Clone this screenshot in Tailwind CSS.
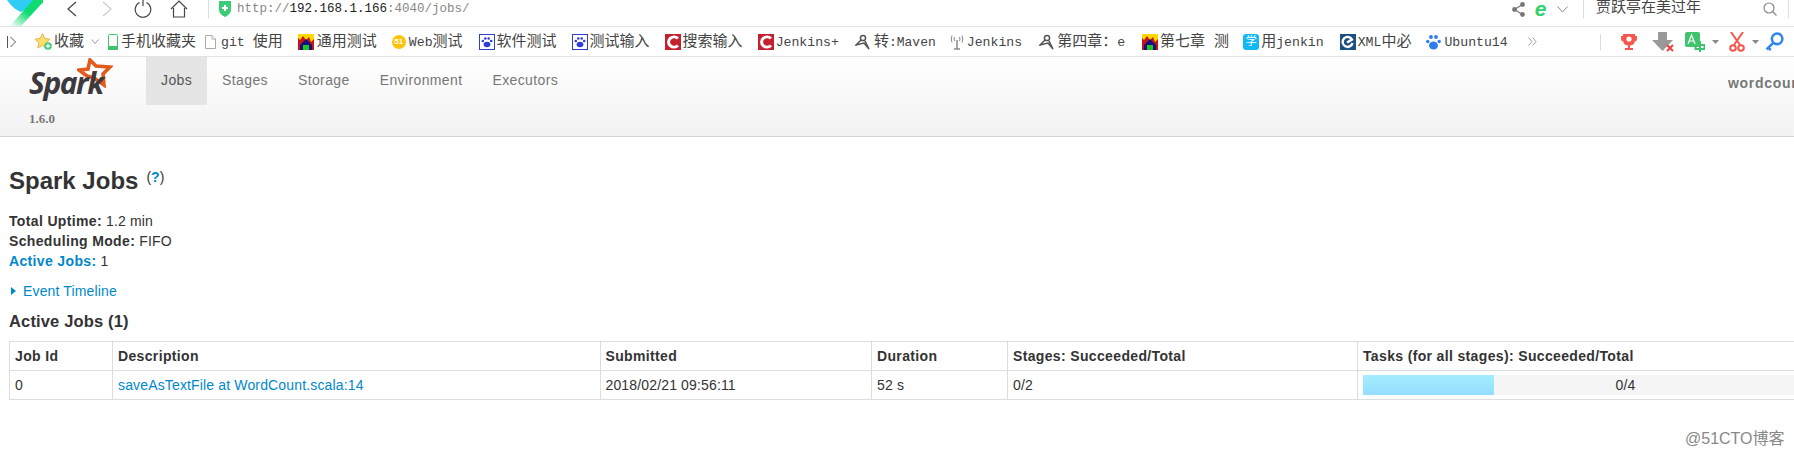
<!DOCTYPE html>
<html lang="zh">
  <head>
    <meta charset="UTF-8" />
    <title>Spark Jobs</title>
    <script src="https://cdn.jsdelivr.net/npm/@tailwindcss/browser@4"></script>
  </head>

  <body class="bg-white w-[1794px] h-[461px] overflow-hidden font-['Liberation_Sans',sans-serif] text-[14px] text-[#333]">
    <!-- browser address row -->
    <div class="flex items-center h-[26px] pb-[8px] font-['Liberation_Mono','Noto_Sans_CJK_SC',monospace] text-[#444]">
      <svg class="ml-[7px] w-[36px] h-[26px] mt-[8px] shrink-0" viewBox="0 0 36 26">
        <defs>
          <linearGradient id="logoGreen" x1="1" y1="0" x2="0" y2="1">
            <stop offset="0.5" stop-color="#0fdc6e" />
            <stop offset="1" stop-color="#ffffff" />
          </linearGradient>
        </defs>
        <path d="M0 0 H28 Q22 9 14 12 Q6 9 0 0 Z" fill="#2fcdf5" />
        <path d="M26 0 H38 L14 26 H3 Z" fill="url(#logoGreen)" />
      </svg>
      <svg class="ml-[24px] w-[10px] h-[16px]" viewBox="0 0 10 16" fill="none" stroke="#444" stroke-width="1.2"><path d="M9 1 L1 8 L9 15" /></svg>
      <svg class="ml-[25px] w-[10px] h-[16px]" viewBox="0 0 10 16" fill="none" stroke="#ccc" stroke-width="1.2"><path d="M1 1 L9 8 L1 15" /></svg>
      <svg class="ml-[22px] w-[18px] h-[18px]" viewBox="0 0 18 18" fill="none" stroke="#444" stroke-width="1.2"><path d="M5.5 2.5 A7.8 7.8 0 1 0 12.5 2.5" /><path d="M9 0 V6" /></svg>
      <svg class="ml-[18px] w-[18px] h-[18px]" viewBox="0 0 18 18" fill="none" stroke="#444" stroke-width="1.2"><path d="M1 9 L9 1 L17 9" /><path d="M3.5 8 V17 H14.5 V8" /></svg>
      <div class="ml-[20px] w-px h-[18px] bg-[#ddd]"></div>
      <svg class="ml-[9px] w-[14px] h-[16px]" viewBox="0 0 14 16"><path d="M1 0 H13 V9 Q13 13 7 16 Q1 13 1 9 Z" fill="#3ecb78" /><path d="M7 4 V10 M4 7 H10" stroke="#fff" stroke-width="2" /></svg>
      <div class="ml-[5px] text-[12.5px] text-[#888]">http://<span class="text-[#222]">192.168.1.166</span>:4040/jobs/</div>
      <svg class="ml-auto w-[13px] h-[15px]" viewBox="0 0 13 15" fill="#777"><circle cx="10.5" cy="2.5" r="2.4" /><circle cx="2.5" cy="7.5" r="2.4" /><circle cx="10.5" cy="12.5" r="2.4" /><path d="M10.5 2.5 L2.5 7.5 L10.5 12.5" fill="none" stroke="#777" stroke-width="1.2" /></svg>
      <div class="ml-[9px] w-[13px] text-center font-['Liberation_Sans'] italic font-bold text-[21px] leading-[16px] text-[#2ed36c]">e</div>
      <svg class="ml-[10px] w-[11px] h-[7px]" viewBox="0 0 11 7" fill="none" stroke="#888"><path d="M0.5 0.5 L5.5 6 L10.5 0.5" /></svg>
      <div class="ml-[15px] w-px h-[18px] bg-[#ddd]"></div>
      <div class="ml-[12px] w-[167px] text-[15px]">贾跃亭在美过年</div>
      <svg class="w-[14px] h-[14px]" viewBox="0 0 14 14" fill="none" stroke="#888" stroke-width="1.2"><circle cx="6" cy="6" r="5" /><path d="M9.5 9.5 L13.5 13.5" /></svg>
      <div class="ml-[11px] mr-[5px] w-px h-[18px] bg-[#ddd]"></div>
    </div>

    <!-- bookmark row -->
    <div class="flex items-center h-[31px] border-y border-[#e2e2e2] font-['Liberation_Mono','Noto_Sans_CJK_SC',monospace] text-[15px] text-[#444] whitespace-nowrap [&>span]:pt-[3px]">
      <svg class="ml-[7px] w-[9px] h-[12px]" viewBox="0 0 9 12" fill="none" stroke="#555"><path d="M0.5 0 V12" /><path d="M3.5 1 L8.5 6 L3.5 11" /></svg>
      <svg class="ml-[19px] w-[17px] h-[17px]" viewBox="0 0 17 17"><path d="M7.5 0.5 L9.8 5.5 L15 6.2 L11.2 9.8 L12.2 15 L7.5 12.5 L2.8 15 L3.8 9.8 L0 6.2 L5.2 5.5 Z" fill="#ffdf6b" stroke="#eab54a" /><circle cx="13" cy="13" r="3.8" fill="#3ecb78" /><path d="M13 10.8 V15.2 M10.8 13 H15.2" stroke="#fff" stroke-width="1.3" /></svg>
      <span class="ml-[2px]">收藏</span>
      <svg class="ml-[7px] w-[8px] h-[5px]" viewBox="0 0 8 5" fill="none" stroke="#999"><path d="M0.5 0.5 L4 4.5 L7.5 0.5" /></svg>
      <svg class="ml-[9px] w-[10px] h-[16px]" viewBox="0 0 10 16"><rect x="0.5" y="0.5" width="9" height="15" rx="1" fill="#fff" stroke="#3ec46d" /><rect x="0" y="12" width="10" height="4" fill="#3ec46d" /></svg>
      <span class="ml-[3px]">手机收藏夹</span>
      <svg class="ml-[9px] w-[11px] h-[14px]" viewBox="0 0 11 14" fill="#fff" stroke="#aaa"><path d="M0.5 0.5 H7 L10.5 4 V13.5 H0.5 Z" /><path d="M7 0.5 V4 H10.5" /></svg>
      <span class="ml-[5px] flex items-center gap-[8px]"><span class="text-[13.2px]">git</span>使用</span>

      <svg class="ml-[15px] w-[16px] h-[16px]" viewBox="0 0 16 16"><rect width="16" height="16" fill="#c71414" /><path d="M0 0 H16 V5 L13 8 L11 3 L8 6 L5 2 L2 6 L0 4 Z" fill="#ffd800" /><path d="M8 5 L14 11 V16 H2 V11 Z" fill="#101080" /><path d="M5 16 V11 H11 V16" fill="#22c522" /></svg>
      <span class="ml-[3px]">通用测试</span>

      <div class="ml-[15px] w-[14px] h-[14px] rounded-full bg-[#ffc30b] border-[2px] border-[#ffc30b] flex items-center justify-center font-['Liberation_Sans'] font-bold text-[8px] leading-[8px] text-white">51</div>
      <span class="ml-[3px] flex items-center"><span class="text-[13.2px]">Web</span>测试</span>

      <svg class="ml-[16px] w-[16px] h-[16px]" viewBox="0 0 16 16"><rect x="0.5" y="0.5" width="15" height="15" fill="#fff" stroke="#2f3fd6" /><g fill="#2f3fd6"><ellipse cx="8" cy="10.5" rx="3.4" ry="2.8" /><circle cx="3.8" cy="7" r="1.3" /><circle cx="6.3" cy="4.5" r="1.3" /><circle cx="9.7" cy="4.5" r="1.3" /><circle cx="12.2" cy="7" r="1.3" /></g></svg>
      <span class="ml-[2px]">软件测试</span>

      <svg class="ml-[15px] w-[16px] h-[16px]" viewBox="0 0 16 16"><rect x="0.5" y="0.5" width="15" height="15" fill="#fff" stroke="#2f3fd6" /><g fill="#2f3fd6"><ellipse cx="8" cy="10.5" rx="3.4" ry="2.8" /><circle cx="3.8" cy="7" r="1.3" /><circle cx="6.3" cy="4.5" r="1.3" /><circle cx="9.7" cy="4.5" r="1.3" /><circle cx="12.2" cy="7" r="1.3" /></g></svg>
      <span class="ml-[2px]">测试输入</span>

      <svg class="ml-[15px] w-[16px] h-[16px]" viewBox="0 0 16 16"><rect width="16" height="16" fill="#c4202e" /><path d="M13 4.5 A5.5 5 0 1 0 13 11.5" fill="none" stroke="#fff" stroke-width="3" /></svg>
      <span class="ml-[2px]">搜索输入</span>

      <svg class="ml-[15px] w-[16px] h-[16px]" viewBox="0 0 16 16"><rect width="16" height="16" fill="#c4202e" /><path d="M13 4.5 A5.5 5 0 1 0 13 11.5" fill="none" stroke="#fff" stroke-width="3" /></svg>
      <span class="ml-[2px] text-[13.2px]">Jenkins+</span>

      <svg class="ml-[16px] w-[15px] h-[16px]" viewBox="0 0 15 16" fill="none" stroke="#555" stroke-width="1.5"><circle cx="8" cy="4" r="2.6" /><path d="M6 6 L1 11 L9 9 L14 15 L10 7" /></svg>
      <span class="ml-[4px] flex items-center">转<span class="text-[13px]">:Maven</span></span>

      <svg class="ml-[14px] w-[14px] h-[16px]" viewBox="0 0 14 16" fill="none" stroke="#888"><path d="M7 6 V15 M4 15 H10" stroke-width="1.5" /><path d="M4.5 3 Q3.5 5 4.5 7 M9.5 3 Q10.5 5 9.5 7 M2 1.5 Q0.5 5 2 8.5 M12 1.5 Q13.5 5 12 8.5" /></svg>
      <span class="ml-[3px] text-[13.2px]">Jenkins</span>

      <svg class="ml-[17px] w-[15px] h-[16px]" viewBox="0 0 15 16" fill="none" stroke="#555" stroke-width="1.5"><circle cx="8" cy="4" r="2.6" /><path d="M6 6 L1 11 L9 9 L14 15 L10 7" /></svg>
      <span class="ml-[3px] flex items-center">第四章：<span class="text-[13.2px]">e</span></span>

      <svg class="ml-[17px] w-[16px] h-[16px]" viewBox="0 0 16 16"><rect width="16" height="16" fill="#c71414" /><path d="M0 0 H16 V5 L13 8 L11 3 L8 6 L5 2 L2 6 L0 4 Z" fill="#ffd800" /><path d="M8 5 L14 11 V16 H2 V11 Z" fill="#101080" /><path d="M5 16 V11 H11 V16" fill="#22c522" /></svg>
      <span class="ml-[2px]">第七章 测</span>

      <div class="ml-[14px] w-[16px] h-[16px] rounded-[3px] bg-[#12b7f5] text-white text-[11px] leading-[16px] text-center">学</div>
      <span class="ml-[2px] flex items-center">用<span class="text-[13.2px]">jenkin</span></span>

      <svg class="ml-[16px] w-[16px] h-[16px]" viewBox="0 0 16 16"><rect width="16" height="16" fill="#1c4f82" /><path d="M12.5 9 A5 5 0 1 1 12 5.5 L7 8.5" fill="none" stroke="#fff" stroke-width="2.4" /></svg>
      <span class="ml-[2px] flex items-center"><span class="text-[13.2px]">XML</span>中必</span>

      <svg class="ml-[15px] w-[15px] h-[16px]" viewBox="0 0 15 16" fill="#2f7bf0"><ellipse cx="7.5" cy="11.5" rx="4.5" ry="4" /><circle cx="1.8" cy="7.5" r="1.7" /><circle cx="5" cy="3" r="1.9" /><circle cx="10" cy="3" r="1.9" /><circle cx="13.2" cy="7.5" r="1.7" /></svg>
      <span class="ml-[3px] text-[13.2px]">Ubuntu14</span>

      <svg class="ml-[20px] w-[9px] h-[9px]" viewBox="0 0 9 9" fill="none" stroke="#999"><path d="M0.5 0.5 L4 4.5 L0.5 8.5 M4.5 0.5 L8 4.5 L4.5 8.5" /></svg>

      <div class="ml-[63px] w-px h-[16px] bg-[#ddd]"></div>
      <svg class="ml-[19px] w-[18px] h-[18px]" viewBox="0 0 18 18"><path d="M3 1 H15 V7 Q15 12 10 12.5 V15 H13 V17 H5 V15 H8 V12.5 Q3 12 3 7 Z M3 3 H1 V6 Q1 8 3 8.5 M15 3 H17 V6 Q17 8 15 8.5" fill="#f5574d" /><circle cx="9" cy="6" r="2.6" fill="#fff" /></svg>
      <svg class="ml-[14px] w-[23px] h-[20px]" viewBox="0 0 23 20"><path d="M6 0 H15 V8 H21 L10.5 19 L0 8 H6 Z" fill="#999" /><path d="M15 13 L21 19 M21 13 L15 19" stroke="#f0413a" stroke-width="2" /></svg>
      <svg class="ml-[10px] w-[20px] h-[20px]" viewBox="0 0 20 20"><rect width="15" height="15" rx="2" fill="#3ec46d" /><path d="M3 12 L6.5 3 L10 12 M4.5 9 H8.5" fill="none" stroke="#fff" stroke-width="1.2" /><path d="M15 9 V20 M10.5 13 H19.5 V17 H10.5 Z" fill="none" stroke="#3ec46d" stroke-width="2" /></svg>
      <svg class="ml-[7px] w-[7px] h-[4px]" viewBox="0 0 7 4" fill="#888"><path d="M0 0 H7 L3.5 4 Z" /></svg>
      <svg class="ml-[10px] w-[16px] h-[20px]" viewBox="0 0 16 20" fill="none" stroke="#f5574d" stroke-width="2"><path d="M2 0 L11 13 M14 0 L5 13" /><circle cx="4" cy="16" r="2.8" /><circle cx="12" cy="16" r="2.8" /></svg>
      <svg class="ml-[7px] w-[7px] h-[4px]" viewBox="0 0 7 4" fill="#888"><path d="M0 0 H7 L3.5 4 Z" /></svg>
      <svg class="ml-[6px] w-[19px] h-[19px]" viewBox="0 0 18 18" fill="none" stroke="#2f86f0" stroke-width="2.4"><circle cx="11.5" cy="6.5" r="5" /><path d="M8 10 L1.5 16.5 M3 15 L5.5 17" /></svg>
    </div>

    <!-- spark navbar -->
    <nav class="flex h-[80px] border-b border-[#d4d4d4] bg-linear-to-b from-white to-[#f2f2f2] text-[#777]">
      <div class="relative w-[146px] shrink-0">
        <svg class="absolute left-[77px] top-[1px] w-[36px] h-[30px]" viewBox="0 0 36 30" fill="#fff" stroke="#e25a1c" stroke-width="3.6"><path d="M13 2 L19 8 L33 9 L26 16 L27 27 L17 20 L10 18 L2 12 L11 11 Z" /></svg>
        <div class="relative pl-[29px] pt-[8px] font-['Open_Sans'] italic font-bold text-[30px] leading-[36px] tracking-[-1.5px] text-[#3c3a3e]">Spark</div>
        <div class="pl-[29px] pt-[10px] font-['Liberation_Serif'] font-bold text-[13px] leading-[16px]">1.6.0</div>
      </div>
      <div class="flex h-[48px] leading-[46px] tracking-[0.38px]">
        <a class="px-[15px] bg-[#e5e5e5] text-[#555]">Jobs</a>
        <a class="px-[15px]">Stages</a>
        <a class="px-[15px]">Storage</a>
        <a class="px-[15px]">Environment</a>
        <a class="px-[15px]">Executors</a>
      </div>
      <div class="ml-auto mt-[16px] w-[66px] font-bold text-[14px] leading-[20px] tracking-[0.7px] whitespace-nowrap">wordcount</div>
    </nav>

    <!-- page content -->
    <main class="pl-[9px] relative tracking-[0.15px]">
      <h3 class="pt-[29px] text-[24px] leading-[30px] font-bold flex tracking-normal">Spark Jobs<sup class="ml-[8px] mt-[11px] text-[14px] leading-[14px] font-normal"><span>(</span><span class="font-bold text-[#0088cc]">?</span><span>)</span></sup></h3>
      <ul class="mt-[15px] leading-[20px]">
        <li><strong class="tracking-[0.35px]">Total Uptime:</strong> 1.2 min</li>
        <li><strong class="tracking-[0.35px]">Scheduling Mode:</strong> FIFO</li>
        <li><strong class="tracking-[0.35px] text-[#0088cc]">Active Jobs:</strong> 1</li>
      </ul>
      <div class="mt-[10px] flex items-center leading-[20px] text-[#0088cc]">
        <span class="ml-[2px] w-0 h-0 border-y-[4px] border-y-transparent border-l-[5px] border-l-[#0088cc]"></span>
        <span class="ml-[7px]">Event Timeline</span>
      </div>
      <h4 class="mt-[10px] text-[16.5px] leading-[20px] font-bold">Active Jobs (1)</h4>

      <table class="mt-[10px] w-[1884px] table-fixed border-collapse">
        <colgroup>
          <col class="w-[103px]" />
          <col class="w-[487.5px]" />
          <col class="w-[271.5px]" />
          <col class="w-[136px]" />
          <col class="w-[350px]" />
          <col class="w-[536px]" />
        </colgroup>
        <thead>
          <tr class="h-[29px] text-left tracking-[0.35px]">
            <th class="border border-[#ddd] px-[5px]">Job Id</th>
            <th class="border border-[#ddd] px-[5px]">Description</th>
            <th class="border border-[#ddd] px-[5px]">Submitted</th>
            <th class="border border-[#ddd] px-[5px]">Duration</th>
            <th class="border border-[#ddd] px-[5px]">Stages: Succeeded/Total</th>
            <th class="border border-[#ddd] px-[5px]">Tasks (for all stages): Succeeded/Total</th>
          </tr>
        </thead>
        <tbody>
          <tr class="h-[29px]">
            <td class="border border-[#ddd] px-[5px]">0</td>
            <td class="border border-[#ddd] px-[5px] text-[#0088cc]">saveAsTextFile at WordCount.scala:14</td>
            <td class="border border-[#ddd] px-[5px]">2018/02/21 09:56:11</td>
            <td class="border border-[#ddd] px-[5px]">52 s</td>
            <td class="border border-[#ddd] px-[5px]">0/2</td>
            <td class="border border-[#ddd] px-[5px]">
              <div class="relative h-[20px] bg-[#f5f5f5] text-center leading-[20px]">
                <div class="absolute left-0 top-0 h-full w-[25%] bg-linear-to-b from-[#a4edff] to-[#94ddff]"></div>
                <span class="relative">0/4</span>
              </div>
            </td>
          </tr>
        </tbody>
      </table>

      <div class="absolute left-[1685px] top-[292px] text-[16px] leading-[20px] tracking-normal text-[#888] font-['Liberation_Sans','Noto_Sans_CJK_SC',sans-serif]">@51CTO博客</div>
    </main>
  </body>
</html>
